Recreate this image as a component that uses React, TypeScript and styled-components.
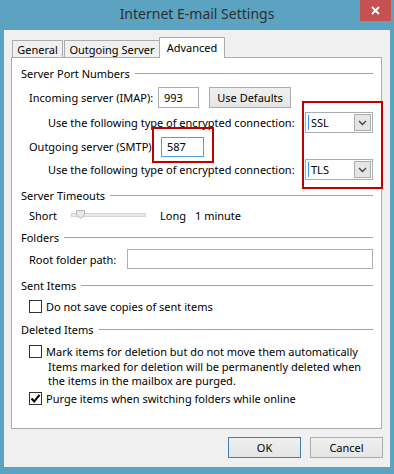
import React from 'react';
import styled, { createGlobalStyle } from 'styled-components';

const Global = createGlobalStyle`
  html, body { margin: 0; padding: 0; }
  body {
    font-family: "Noto Sans", "Open Sans", sans-serif;
    font-size: 11px;
    color: #000;
  }
  * { box-sizing: border-box; }
`;

const Frame = styled.div`
  width: 394px;
  height: 474px;
  background: #5ba3c0;
  padding: 0 4px 7px;
  display: flex;
  flex-direction: column;
`;

const TitleBar = styled.div`
  height: 30px;
  margin: 0 -4px;
  display: grid;
  grid-template-columns: 1fr auto 1fr;
`;

const Title = styled.div`
  grid-column: 2;
  align-self: center;
  margin-top: -3px;
  font-size: 14px;
  color: #2e2e2e;
`;

const Close = styled.div`
  grid-column: 3;
  justify-self: end;
  align-self: start;
  width: 31px;
  height: 21px;
  margin-right: 3px;
  background: #c75050;
  display: flex;
  align-items: center;
  justify-content: center;
`;

const Client = styled.div`
  flex: 1;
  background: #f0f0f0;
  padding: 7px 7px 0 7px;
  display: flex;
  flex-direction: column;
`;

const TabStrip = styled.div`
  display: flex;
  align-items: flex-end;
  height: 20px;
  margin-left: 1px;
  position: relative;
  z-index: 1;
`;

const Tab = styled.div<{ $w: number; $active?: boolean }>`
  width: ${(p) => p.$w}px;
  height: ${(p) => (p.$active ? 21 : 17)}px;
  margin-bottom: ${(p) => (p.$active ? -1 : 0)}px;
  margin-left: ${(p) => (p.$active ? -1 : 1)}px;
  border: 1px solid #acacac;
  border-bottom: none;
  background: ${(p) => (p.$active ? '#fff' : '#f0f0f0')};
  display: flex;
  align-items: ${(p) => (p.$active ? 'flex-start' : 'center')};
  padding-top: ${(p) => (p.$active ? 2 : 0)}px;
  justify-content: center;
  white-space: nowrap;
  &:first-child { margin-left: 0; }
`;

const Panel = styled.div`
  height: 372px;
  margin-right: 1px;
  border: 1px solid #adadad;
  background: #fff;
  padding: 7px 8px 0 9px;
  display: flex;
  flex-direction: column;
  position: relative;
`;

const GroupHeader = styled.div<{ $mt: number }>`
  height: 16px;
  margin-top: ${(p) => p.$mt}px;
  display: flex;
  align-items: center;
  gap: 5px;
  white-space: nowrap;
  &::after {
    content: '';
    flex: 1;
    height: 1px;
    background: #a0a0a0;
    margin-top: 1px;
  }
`;

const FieldRow = styled.div<{ $mt: number; $h: number; $indent: number }>`
  height: ${(p) => p.$h}px;
  margin-top: ${(p) => p.$mt}px;
  padding-left: ${(p) => p.$indent}px;
  display: flex;
  align-items: center;
  white-space: nowrap;
`;

const Label = styled.span<{ $w?: number }>`
  flex: none;
  width: ${(p) => (p.$w ? `${p.$w}px` : 'auto')};
`;

const TextBox = styled.div<{ $w?: number; $h: number; $focus?: boolean }>`
  width: ${(p) => (p.$w ? `${p.$w}px` : 'auto')};
  flex: ${(p) => (p.$w ? 'none' : '1')};
  height: ${(p) => p.$h}px;
  border: 1px solid ${(p) => (p.$focus ? '#569de5' : '#abadb3')};
  background: #fff;
  padding-left: 5px;
  display: flex;
  align-items: center;
`;

const PushButton = styled.div<{ $w: number; $default?: boolean; $ml?: number }>`
  width: ${(p) => p.$w}px;
  height: 21px;
  margin-left: ${(p) => p.$ml ?? 0}px;
  border: 1px solid ${(p) => (p.$default ? '#3c7fb1' : '#acacac')};
  background: linear-gradient(#f0f0f0, #e5e5e5);
  display: flex;
  align-items: center;
  justify-content: center;
`;

const Select = styled.div`
  width: 68px;
  height: 21px;
  margin-left: auto;
  border: 1px solid #abadb3;
  background: #fff;
  display: flex;
  align-items: center;
  padding: 0 1px 0 2px;
`;

const Caret = styled.span`
  width: 1px;
  height: 15px;
  background: #3399ff;
  margin-right: 2px;
`;

const SelectText = styled.span`
  flex: 1;
`;

const DropButton = styled.div`
  width: 17px;
  height: 17px;
  border: 1px solid #acacac;
  background: #e5e5e5;
  display: flex;
  align-items: center;
  justify-content: center;
`;

const Track = styled.div`
  width: 75px;
  height: 4px;
  background: #e7eaea;
  border: 1px solid #d6d6d6;
  position: relative;
  margin-right: 14px;
`;

const Thumb = styled.svg`
  position: absolute;
  left: 4px;
  top: -4px;
`;

const CheckBox = styled.div`
  width: 13px;
  height: 13px;
  border: 1px solid #333;
  background: #fff;
  margin-right: 4px;
  flex: none;
  display: flex;
  align-items: center;
  justify-content: center;
`;

const Note = styled.div<{ $mt: number; $indent: number }>`
  margin-top: ${(p) => p.$mt}px;
  padding-left: ${(p) => p.$indent}px;
  line-height: 14px;
  height: 28px;
  white-space: nowrap;
`;

const Highlight = styled.div<{ $x: number; $y: number; $w: number; $h: number }>`
  position: absolute;
  left: ${(p) => p.$x}px;
  top: ${(p) => p.$y}px;
  width: ${(p) => p.$w}px;
  height: ${(p) => p.$h}px;
  border: 2px solid #c00000;
  pointer-events: none;
`;

const ButtonBar = styled.div`
  margin-top: 8px;
  display: flex;
  justify-content: flex-end;
  gap: 9px;
`;

const Chevron = () => (
  <svg width="9" height="6" viewBox="0 0 9 6">
    <path d="M1 1 L4.5 4.5 L8 1" fill="none" stroke="#444" strokeWidth="1.4" />
  </svg>
);

const Check = () => (
  <svg width="11" height="11" viewBox="0 0 11 11">
    <path d="M1.5 5.5 L4.2 8.5 L9.5 1.8" fill="none" stroke="#000" strokeWidth="2" />
  </svg>
);

const Dropdown = ({ value }: { value: string }) => (
  <Select>
    <Caret />
    <SelectText>{value}</SelectText>
    <DropButton>
      <Chevron />
    </DropButton>
  </Select>
);

export default function App() {
  return (
    <>
      <Global />
      <Frame>
        <TitleBar>
          <Title>Internet E-mail Settings</Title>
          <Close>
            <svg width="9" height="9" viewBox="0 0 9 9">
              <path d="M1 1 L8 8 M8 1 L1 8" stroke="#fff" strokeWidth="1.8" />
            </svg>
          </Close>
        </TitleBar>
        <Client>
          <TabStrip>
            <Tab $w={51}>General</Tab>
            <Tab $w={96}>Outgoing Server</Tab>
            <Tab $w={66} $active>
              Advanced
            </Tab>
          </TabStrip>
          <Panel>
            <GroupHeader $mt={0}>Server Port Numbers</GroupHeader>
            <FieldRow $mt={6} $h={21} $indent={8}>
              <Label $w={129}>Incoming server (IMAP):</Label>
              <TextBox $w={41} $h={21}>993</TextBox>
              <PushButton $w={82} $ml={10}>Use Defaults</PushButton>
            </FieldRow>
            <FieldRow $mt={4} $h={21} $indent={27}>
              <Label>Use the following type of encrypted connection:</Label>
              <Dropdown value="SSL" />
            </FieldRow>
            <FieldRow $mt={3} $h={21} $indent={8}>
              <Label $w={132}>Outgoing server (SMTP):</Label>
              <TextBox $w={43} $h={20} $focus>
                587
              </TextBox>
            </FieldRow>
            <FieldRow $mt={2} $h={21} $indent={27}>
              <Label>Use the following type of encrypted connection:</Label>
              <Dropdown value="TLS" />
            </FieldRow>
            <GroupHeader $mt={7}>Server Timeouts</GroupHeader>
            <FieldRow $mt={4} $h={16} $indent={8}>
              <Label $w={42}>Short</Label>
              <Track>
                <Thumb width="9" height="9" viewBox="0 0 9 9">
                  <path d="M0.5 0.5 H8.5 V5 L4.5 8.5 L0.5 5 Z" fill="#e8e8e8" stroke="#b5b5b5" />
                </Thumb>
              </Track>
              <Label $w={35}>Long</Label>
              <Label>1 minute</Label>
            </FieldRow>
            <GroupHeader $mt={6}>Folders</GroupHeader>
            <FieldRow $mt={4} $h={20} $indent={8}>
              <Label $w={98}>Root folder path:</Label>
              <TextBox $h={20} />
            </FieldRow>
            <GroupHeader $mt={8}>Sent Items</GroupHeader>
            <FieldRow $mt={5} $h={16} $indent={8}>
              <CheckBox />
              <Label>Do not save copies of sent items</Label>
            </FieldRow>
            <GroupHeader $mt={7}>Deleted Items</GroupHeader>
            <FieldRow $mt={6} $h={16} $indent={8}>
              <CheckBox />
              <Label>Mark items for deletion but do not move them automatically</Label>
            </FieldRow>
            <Note $mt={1} $indent={27}>
              Items marked for deletion will be permanently deleted when
              <br />
              the items in the mailbox are purged.
            </Note>
            <FieldRow $mt={2} $h={16} $indent={8}>
              <CheckBox>
                <Check />
              </CheckBox>
              <Label>Purge items when switching folders while online</Label>
            </FieldRow>
            <Highlight $x={140} $y={69} $w={62} $h={36} />
            <Highlight $x={290} $y={43} $w={81} $h={88} />
          </Panel>
          <ButtonBar>
            <PushButton $w={73} $default>
              OK
            </PushButton>
            <PushButton $w={73}>Cancel</PushButton>
          </ButtonBar>
        </Client>
      </Frame>
    </>
  );
}
